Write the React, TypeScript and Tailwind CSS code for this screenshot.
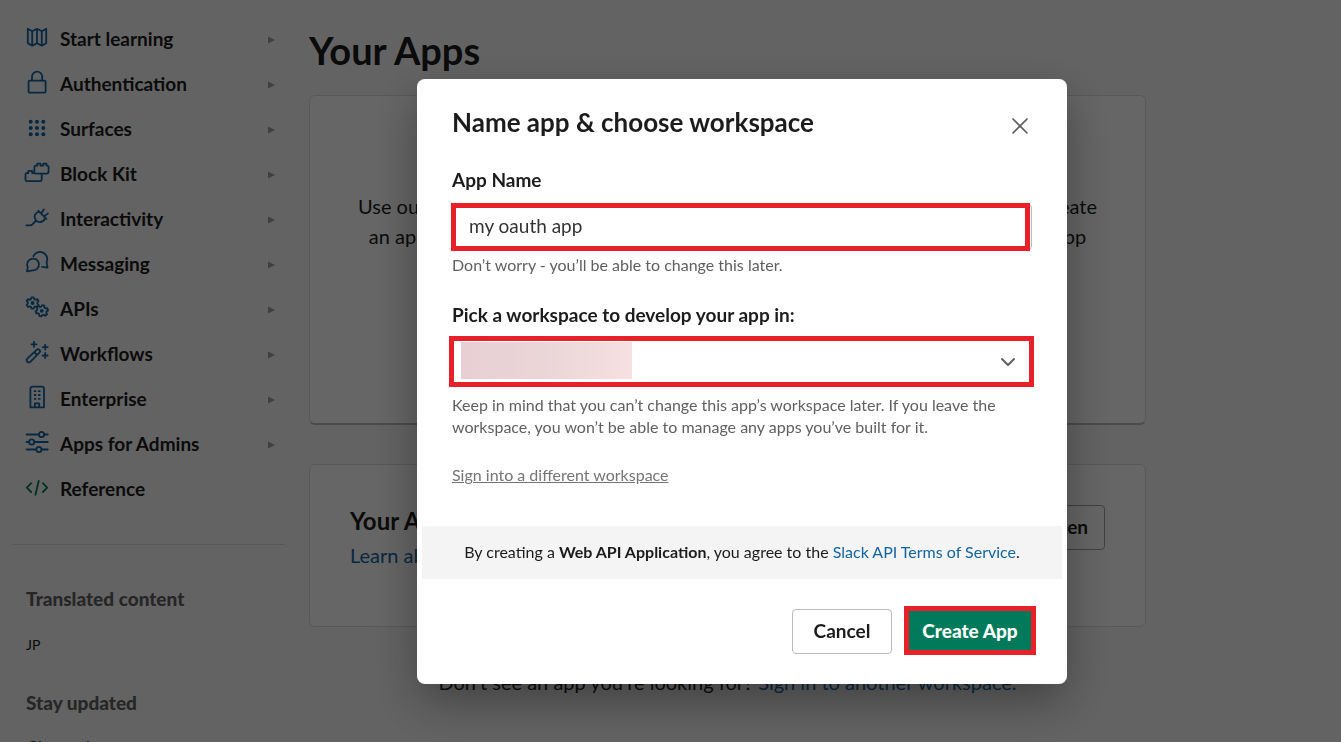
import React from 'react';
import { X, ChevronDown } from 'lucide-react';

interface NavItem {
  label: string;
  icon: React.ReactNode;
  expandable?: boolean;
}

const GEAR =
  'M-1.1-5.6h2.2l.5 1.7 1.2.7 1.8-.7 1.4 1.9-1.2 1.3v1.4l1.2 1.3-1.4 1.9-1.8-.6-1.2.7-.5 1.6h-2.2l-.5-1.6-1.2-.7-1.8.6-1.4-1.9 1.2-1.3v-1.4l-1.2-1.3 1.4-1.9 1.8.7 1.2-.7z';

const NAV_ITEMS: NavItem[] = [
  {
    label: 'Start learning',
    expandable: true,
    icon: <path d="M2.8 2.8l4.4 2.4 4.8-2.4 4.8 2.4 4.4-2.4v14.4l-4.4 2.4-4.8-2.4-4.8 2.4-4.4-2.4zM7.2 5.2v14.4M12 2.8v14.4M16.8 5.2v14.4" />,
  },
  {
    label: 'Authentication',
    expandable: true,
    icon: (
      <>
        <rect x="3.6" y="9.6" width="17" height="12" rx="1.2" />
        <path d="M7 9.6V5.8a5.1 5.1 0 0 1 10.2 0v3.8" />
      </>
    ),
  },
  {
    label: 'Surfaces',
    expandable: true,
    icon: (
      <g fill="currentColor" stroke="none">
        {[5.7, 12, 18.3].map((y) => [5.7, 12, 18.3].map((x) => <circle key={`${x}-${y}`} cx={x} cy={y} r="2" />))}
      </g>
    ),
  },
  {
    label: 'Block Kit',
    expandable: true,
    icon: (
      <>
        <path d="M10.4 12.6h11.2a2 2 0 0 0 2-2V6.2a1.5 1.5 0 0 0-1.5-1.5h-.6V2.6h-3.2v2.1h-2.8V2.6h-3.2v2.1h-1.4a1.5 1.5 0 0 0-1.5 1.5v4.9a1.5 1.5 0 0 0 1 1.5" />
        <path d="M8.6 12H7.2V9.8H3.4V12H2a1.5 1.5 0 0 0-1.5 1.5v5.2a1.5 1.5 0 0 0 1.5 1.5h13.2a1.5 1.5 0 0 0 1.5-1.5v-5.8" />
      </>
    ),
  },
  {
    label: 'Interactivity',
    expandable: true,
    icon: <path d="M13.4 4.8l8 8M14.2 5.6c-4.4 1-5.8 5-3.6 8.4 2.4 3.2 7.4 2.8 10-2M16.2 7.2l2.8-3.8M19 10.4l4-3M10.8 14.6c-2.8 3.4-3.2 4.8-6 4.8H1.4" />,
  },
  {
    label: 'Messaging',
    expandable: true,
    icon: (
      <>
        <path d="M2 20.4l.8-4.2a5.9 5.9 0 1 1 4.8 3.2z" />
        <path d="M8.4 5.2a7.2 7.2 0 0 1 13.2 6l.9 5.4-5.4-.7" />
      </>
    ),
  },
  {
    label: 'APIs',
    expandable: true,
    icon: (
      <>
        <path d={GEAR} transform="translate(7.6 7)" />
        <path d={GEAR} transform="translate(16.8 14.8) rotate(15)" />
        <circle cx="7.6" cy="7" r="1" />
        <circle cx="16.8" cy="14.8" r="1" />
      </>
    ),
  },
  {
    label: 'Workflows',
    expandable: true,
    icon: (
      <>
        <path d="M2.3 17.6L11.6 8.8a1.9 1.9 0 0 1 2.8 2.8L5.3 20.8a2.1 2.1 0 0 1-3-3.2zM9.2 11.2l2.8 2.8" />
        <path d="M9 .8v5M6.5 3.3h5M20.2 3.6v5M17.7 6.1h5M20.2 12v5M17.7 14.5h5" />
      </>
    ),
  },
  {
    label: 'Enterprise',
    expandable: true,
    icon: (
      <>
        <path d="M5.4 21.4V2.6a2 2 0 0 1 2-2h9.6a2 2 0 0 1 2 2v18.8zM9.8 21.4v-4h4.4v4" />
        <path d="M9.6 5.2h1M13.8 5.2h1M9.6 9h1M13.8 9h1M9.6 12.8h1M13.8 12.8h1" />
      </>
    ),
  },
  {
    label: 'Apps for Admins',
    expandable: true,
    icon: (
      <>
        <path d="M1.6 3.5h12.2M19.2 3.5h3.6M1.6 11h2.4M9.4 11h13.4M1.6 18.5h9.6M16.6 18.5h6.2" />
        <circle cx="16.5" cy="3.5" r="2.6" />
        <circle cx="6.7" cy="11" r="2.6" />
        <circle cx="13.9" cy="18.5" r="2.6" />
      </>
    ),
  },
  {
    label: 'Reference',
    icon: <path className="text-[#007a5a]" stroke="currentColor" d="M6.2 7.2L1.8 11.6l4.4 4.4M17.8 7.2l4.4 4.4-4.4 4.4M13.8 4.8l-3.4 14" />,
  },
];

function Sidebar() {
  return (
    <aside className="w-[285px] shrink-0 pl-3 pt-[17px]">
      <nav>
        <ul>
          {NAV_ITEMS.map((item) => (
            <li key={item.label}>
              <a href="#" className="flex h-[45px] items-center pl-[13px] pr-[10px] text-[19px] font-bold text-[#1d1c1d]">
                <svg
                  className="mb-1 mr-[11px] h-6 w-6 shrink-0 overflow-visible text-[#1264a3]"
                  viewBox="0 0 24 24"
                  fill="none"
                  stroke="currentColor"
                  strokeWidth="1.8"
                  strokeLinecap="round"
                  strokeLinejoin="round"
                >
                  {item.icon}
                </svg>
                <span className="flex-1">{item.label}</span>
                {item.expandable && (
                  <svg className="h-2 w-[7px] text-[#a0a0a0]" viewBox="0 0 7 8" fill="currentColor">
                    <path d="M0 .5v7L7 4z" />
                  </svg>
                )}
              </a>
            </li>
          ))}
        </ul>
      </nav>
      <hr className="mt-8 border-[#dddddd]" />
      <div className="pl-[14px]">
        <h4 className="mt-[42px] text-[19px] font-black leading-6 text-[#616061]">Translated content</h4>
        <a href="#" className="mt-6 block text-sm leading-5 text-[#1d1c1d]">JP</a>
        <h4 className="mt-9 text-[19px] font-black leading-6 text-[#616061]">Stay updated</h4>
        <a href="#" className="mt-5 block text-lg leading-6 text-[#1d1c1d]">Changelog</a>
      </div>
    </aside>
  );
}

function AppsPage() {
  return (
    <main className="ml-6 w-full max-w-[837px] pt-6 text-[#1d1c1d]">
      <h1 className="text-[38px] font-bold leading-[52px]">Your Apps</h1>

      <section className="mt-[19px] flex h-[330px] flex-col items-center rounded-md border border-b-2 border-[#dddddd] border-b-[#bbbbbb] bg-white pt-[95px] text-center text-xl leading-[30px]">
        <p className="whitespace-nowrap">
          Use our APIs to build an app that makes people’s working lives better. You can create
          <br />
          an app that’s just for your workspace or create a public app to list, or our team app
        </p>
        <button type="button" className="mt-8 h-[45px] rounded bg-[#007a5a] px-5 text-lg font-bold text-white">
          Create an App
        </button>
      </section>

      <section className="mt-[39px] flex h-[163px] items-start justify-between rounded-md border border-[#dddddd] bg-white px-10 pt-10">
        <div>
          <h3 className="text-2xl font-bold leading-8">Your App Configuration Tokens</h3>
          <a href="#" className="mt-[3px] block text-xl leading-[30px] text-[#1264a3]">Learn about tokens</a>
        </div>
        <button type="button" className="h-[45px] rounded border border-[#a0a0a0] px-4 text-[19px] font-bold">
          Generate Token
        </button>
      </section>

      <p className="mt-10 text-center text-xl leading-[30px]">
        Don’t see an app you’re looking for?{' '}
        <a href="#" className="text-[#1264a3]">Sign in to another workspace.</a>
      </p>
    </main>
  );
}

function CreateAppDialog() {
  return (
    <div className="fixed inset-0 flex items-start justify-center bg-black/60 pl-[143px] pt-[79px]">
      <div
        role="dialog"
        aria-labelledby="dialog-title"
        className="w-full max-w-[650px] rounded-lg bg-white p-[5px] text-[#1d1c1d] shadow-[0_18px_48px_rgba(0,0,0,0.35)]"
      >
        <div className="px-[30px] pt-6">
          <div className="flex h-8 items-end justify-between">
            <h2 id="dialog-title" className="pb-0.5 text-[26px] font-bold leading-8">Name app &amp; choose workspace</h2>
            <button type="button" aria-label="Close" className="-mr-0.5 text-[#616061]">
              <X className="h-7 w-7" strokeWidth={1.5} />
            </button>
          </div>

          <label htmlFor="app-name" className="mt-7 block text-[19px] font-bold leading-6">App Name</label>
          <div className="relative mt-3">
            <input
              id="app-name"
              type="text"
              defaultValue="my oauth app"
              className="block h-[46px] w-full rounded border border-[#bbbbbb] px-4 pb-1 text-[19px] text-[#333333] outline-none"
            />
            <span className="pointer-events-none absolute -left-px -top-px -bottom-px right-0.5 border-[5px] border-[#e8202a]" />
          </div>
          <p className="mt-1 text-base leading-[22px] text-[#616061]">Don’t worry - you’ll be able to change this later.</p>

          <label htmlFor="workspace" className="mt-[27px] block text-[19px] font-bold leading-6">
            Pick a workspace to develop your app in:
          </label>
          <div className="relative mt-3">
            <select id="workspace" className="block h-[46px] w-full appearance-none rounded bg-white px-4 text-lg outline-none">
              <option value="" />
            </select>
            <span className="absolute left-[9px] top-[3px] h-[37px] w-[171px] bg-linear-to-r from-[#e8ced3] via-[#ead6d8] to-[#f6e0e1]" />
            <ChevronDown className="pointer-events-none absolute right-3 top-[11px] h-6 w-6 text-[#616061]" strokeWidth={2} />
            <span className="pointer-events-none absolute -left-[3px] -right-0.5 -top-[3px] -bottom-0.5 border-[5px] border-[#e8202a]" />
          </div>
          <p className="mt-[9px] text-base leading-[22px] text-[#616061]">
            Keep in mind that you can’t change this app’s workspace later. If you leave the workspace, you won’t be able to
            manage any apps you’ve built for it.
          </p>
          <a href="#" className="mt-[26px] block text-base leading-[22px] text-[#757575] underline">
            Sign into a different workspace
          </a>
        </div>

        <p className="mt-10 bg-[#f4f4f4] pb-[17px] pt-[15px] text-center text-base leading-[21px]">
          By creating a <b>Web API Application</b>, you agree to the{' '}
          <a href="#" className="text-[#1264a3]">Slack API Terms of Service</a>.
        </p>

        <div className="flex justify-end gap-4 px-[30px] pb-[25px] pt-[30px]">
          <button type="button" className="h-[45px] w-[100px] rounded border border-[#bbbbbb] text-[19px] font-bold">Cancel</button>
          <div className="relative">
            <button type="button" className="h-[45px] w-[124px] rounded bg-[#007a5a] text-[19px] font-black text-white">
              Create App
            </button>
            <span className="pointer-events-none absolute -left-1 -right-1 -top-[3px] -bottom-px border-[5px] border-[#e8202a]" />
          </div>
        </div>
      </div>
    </div>
  );
}

export default function App() {
  return (
    <div className="flex h-screen overflow-hidden bg-[#f8f8f8] font-['Lato',sans-serif]">
      <Sidebar />
      <AppsPage />
      <CreateAppDialog />
    </div>
  );
}
